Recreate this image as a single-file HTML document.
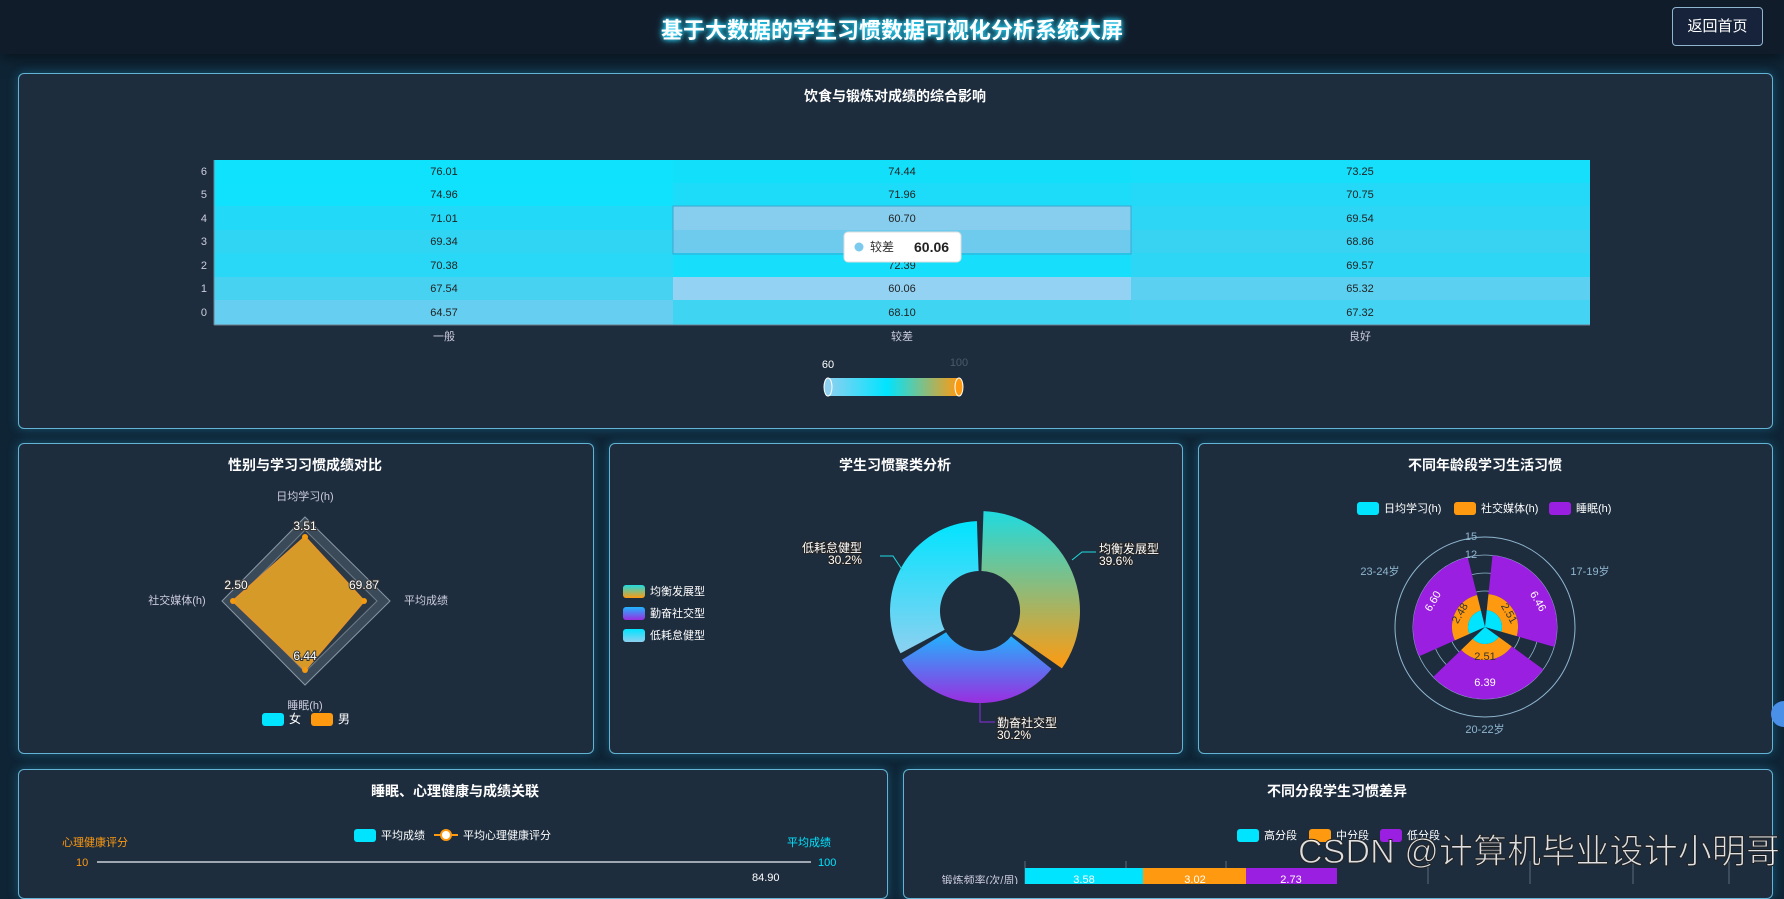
<!DOCTYPE html>
<html><head><meta charset="utf-8"><style>
*{margin:0;padding:0;box-sizing:border-box}
body{width:1784px;height:884px;overflow:hidden;background:#0f2536;font-family:"Liberation Sans","Noto Sans CJK SC",sans-serif;position:relative}
.hdr{position:absolute;left:0;top:0;width:1784px;height:54px;background:#111c2b;box-shadow:0 4px 14px rgba(0,0,0,.5)}
.hdr h1{position:absolute;left:0;width:1784px;top:13px;text-align:center;color:#fff;font-size:22px;font-weight:bold;text-shadow:0 0 8px #2bd9ff,0 0 4px #2bd9ff}
.btn{position:absolute;left:1672px;top:7px;width:91px;height:39px;border:1px solid #8fb6cf;border-radius:4px;color:#fff;font-size:15px;line-height:37px;text-align:center;background:#16233a}
.p{position:absolute;background:#1e2d3e;border:1px solid #63b3d4;border-radius:6px;box-shadow:0 0 10px rgba(40,170,220,.35)}
svg{position:absolute;left:0;top:0}
.t{fill:#fff;font-size:14px;font-weight:bold;text-anchor:middle}
</style></head><body>
<div class="hdr"><h1>基于大数据的学生习惯数据可视化分析系统大屏</h1><div class="btn">返回首页</div></div>
<div class="p" style="left:18px;top:73px;width:1755px;height:356px"></div>
<div class="p" style="left:18px;top:443px;width:576px;height:311px"></div>
<div class="p" style="left:609px;top:443px;width:574px;height:311px"></div>
<div class="p" style="left:1198px;top:443px;width:575px;height:311px"></div>
<div class="p" style="left:18px;top:769px;width:870px;height:130px"></div>
<div class="p" style="left:903px;top:769px;width:870px;height:130px"></div>
<svg width="1784" height="884" viewBox="0 0 1784 884">
<defs>
<linearGradient id="gA" x1="0" y1="0" x2="0" y2="1"><stop offset="0" stop-color="#1fdbe0"/><stop offset="1" stop-color="#ff9a10"/></linearGradient>
<linearGradient id="gB" x1="0" y1="0" x2="0" y2="1"><stop offset="0" stop-color="#1fb6ff"/><stop offset="1" stop-color="#9a2ee0"/></linearGradient>
<linearGradient id="gC" x1="0" y1="0" x2="0" y2="1"><stop offset="0" stop-color="#00e4ff"/><stop offset="1" stop-color="#8dd0f0"/></linearGradient>
<linearGradient id="vm" x1="0" y1="0" x2="1" y2="0"><stop offset="0" stop-color="#8dd0f0"/><stop offset=".45" stop-color="#00e4ff"/><stop offset="1" stop-color="#ff9a10"/></linearGradient>
</defs>
<text class="t" x="895" y="101">饮食与锻炼对成绩的综合影响</text>
<g stroke="none">
<rect x="214" y="160" width="459" height="24" fill="#0ee2fc"/><rect x="673" y="160" width="458" height="24" fill="#12e0fb"/><rect x="1131" y="160" width="459" height="24" fill="#16dffb"/>
<rect x="214" y="183" width="459" height="24" fill="#10e1fc"/><rect x="673" y="183" width="458" height="24" fill="#1cdcf9"/><rect x="1131" y="183" width="459" height="24" fill="#24d9f7"/>
<rect x="214" y="206" width="459" height="24" fill="#22d9f7"/><rect x="673" y="206" width="458" height="24" fill="#86cdee"/><rect x="1131" y="206" width="459" height="24" fill="#2ed6f5"/>
<rect x="214" y="230" width="459" height="24" fill="#30d5f4"/><rect x="673" y="230" width="458" height="24" fill="#6ecbed"/><rect x="1131" y="230" width="459" height="24" fill="#38d3f3"/>
<rect x="214" y="253" width="459" height="24" fill="#28d8f6"/><rect x="673" y="253" width="458" height="24" fill="#16defb"/><rect x="1131" y="253" width="459" height="24" fill="#2ed6f5"/>
<rect x="214" y="277" width="459" height="24" fill="#48d2f2"/><rect x="673" y="277" width="458" height="24" fill="#94d2f4"/><rect x="1131" y="277" width="459" height="24" fill="#5cd0f0"/>
<rect x="214" y="300" width="459" height="25" fill="#66cef0"/><rect x="673" y="300" width="458" height="25" fill="#40d4f3"/><rect x="1131" y="300" width="459" height="25" fill="#44d3f3"/>
</g>
<rect x="673" y="206" width="458" height="48" fill="none" stroke="#3aa8d0" stroke-width="1"/>
<g font-size="11" fill="#222" text-anchor="middle">
<text x="444" y="175">76.01</text><text x="902" y="175">74.44</text><text x="1360" y="175">73.25</text>
<text x="444" y="198">74.96</text><text x="902" y="198">71.96</text><text x="1360" y="198">70.75</text>
<text x="444" y="222">71.01</text><text x="902" y="222">60.70</text><text x="1360" y="222">69.54</text>
<text x="444" y="245">69.34</text><text x="1360" y="245">68.86</text>
<text x="444" y="269">70.38</text><text x="902" y="269">72.39</text><text x="1360" y="269">69.57</text>
<text x="444" y="292">67.54</text><text x="902" y="292">60.06</text><text x="1360" y="292">65.32</text>
<text x="444" y="316">64.57</text><text x="902" y="316">68.10</text><text x="1360" y="316">67.32</text>
</g>
<g font-size="11" fill="#ccd" text-anchor="end">
<text x="207" y="175">6</text><text x="207" y="198">5</text><text x="207" y="222">4</text><text x="207" y="245">3</text><text x="207" y="269">2</text><text x="207" y="292">1</text><text x="207" y="316">0</text>
</g>
<line x1="214" y1="325" x2="1590" y2="325" stroke="#6e7f90"/>
<line x1="214" y1="160" x2="214" y2="325" stroke="#6e7f90"/>
<g font-size="11" fill="#ccd" text-anchor="middle"><text x="444" y="340">一般</text><text x="902" y="340">较差</text><text x="1360" y="340">良好</text></g>
<rect x="844" y="232" width="117" height="30" rx="4" fill="#fff" stroke="#ddd"/>
<circle cx="859" cy="247" r="4.5" fill="#7ccbee"/>
<text x="870" y="251" font-size="12" fill="#333">较差</text>
<text x="914" y="252" font-size="14" font-weight="bold" fill="#222">60.06</text>
<text x="828" y="368" font-size="11" fill="#fff" text-anchor="middle">60</text>
<text x="959" y="366" font-size="11" fill="#4a5a6a" text-anchor="middle">100</text>
<rect x="828" y="378" width="131" height="18" fill="url(#vm)"/>
<ellipse cx="828" cy="387" rx="4" ry="9" fill="#8dd0f0" stroke="#fff"/>
<ellipse cx="959" cy="387" rx="4" ry="9" fill="#ff9a10" stroke="#fff"/>

<text class="t" x="305" y="470">性别与学习习惯成绩对比</text>
<polygon points="305,517 390,601 305,685 222,601" fill="#3b4a58" stroke="#8a98a5"/>
<polygon points="305,530 377,601 305,672 235,601" fill="#2b3846" stroke="#6f7d8a"/>
<polygon points="305,537 364,601 305,670 233,601" fill="#d69a28" stroke="#e0962a" stroke-width="2"/>
<g fill="#f39a10"><circle cx="305" cy="537" r="3"/><circle cx="364" cy="601" r="3"/><circle cx="305" cy="670" r="3"/><circle cx="233" cy="601" r="3"/></g>
<g font-size="12" fill="#fff" text-anchor="middle" style="paint-order:stroke" stroke="#333" stroke-width="2">
<text x="305" y="530">3.51</text><text x="364" y="589">69.87</text><text x="305" y="660">6.44</text><text x="236" y="589">2.50</text></g>
<g font-size="11" fill="#ccd" text-anchor="middle"><text x="305" y="500">日均学习(h)</text><text x="426" y="604">平均成绩</text><text x="305" y="709">睡眠(h)</text><text x="177" y="604">社交媒体(h)</text></g>
<rect x="262" y="713" width="22" height="13" rx="3" fill="#00e4ff"/><text x="289" y="723" font-size="12" fill="#fff">女</text>
<rect x="311" y="713" width="22" height="13" rx="3" fill="#ff9a10"/><text x="338" y="723" font-size="12" fill="#fff">男</text>

<text class="t" x="895" y="470">学生习惯聚类分析</text>
<path d="M983.5,511.1 A100,100 0 0 1 1061.9,668.4 L1012.8,634 A40,40 0 0 0 981.4,571 Z" fill="url(#gA)"/>
<path d="M1051.5,668.9 A92,92 0 0 1 902,659.8 L946.1,632.2 A40,40 0 0 0 1011.1,636.2 Z" fill="url(#gB)"/>
<path d="M900.5,653.2 A90,90 0 0 1 976.9,521.1 L978.6,571 A40,40 0 0 0 944.7,629.8 Z" fill="url(#gC)"/>
<polyline points="1072,560 1082,552 1096,552" fill="none" stroke="#1fdbe0"/>
<polyline points="903,571 893,556 880,556" fill="none" stroke="#1fdbe0"/>
<polyline points="980,703 980,722 995,722" fill="none" stroke="#8a2ee0"/>
<g font-size="12" fill="#fff" style="paint-order:stroke" stroke="#222" stroke-width="2">
<text x="1099" y="553">均衡发展型</text><text x="1099" y="565">39.6%</text>
<text x="802" y="552">低耗怠健型</text><text x="828" y="564">30.2%</text>
<text x="997" y="727">勤奋社交型</text><text x="997" y="739">30.2%</text></g>
<rect x="623" y="585" width="22" height="13" rx="3" fill="url(#gA)"/><text x="650" y="595" font-size="11" fill="#fff">均衡发展型</text>
<rect x="623" y="607" width="22" height="13" rx="3" fill="url(#gB)"/><text x="650" y="617" font-size="11" fill="#fff">勤奋社交型</text>
<rect x="623" y="629" width="22" height="13" rx="3" fill="url(#gC)"/><text x="650" y="639" font-size="11" fill="#fff">低耗怠健型</text>

<text class="t" x="1485" y="470">不同年龄段学习生活习惯</text>
<rect x="1357" y="502" width="22" height="13" rx="3" fill="#00e4ff"/><text x="1384" y="512" font-size="11" fill="#fff">日均学习(h)</text>
<rect x="1454" y="502" width="22" height="13" rx="3" fill="#ff9a10"/><text x="1481" y="512" font-size="11" fill="#fff">社交媒体(h)</text>
<rect x="1549" y="502" width="22" height="13" rx="3" fill="#9b1fe0"/><text x="1576" y="512" font-size="11" fill="#fff">睡眠(h)</text>
<circle cx="1485" cy="627" r="90" fill="none" stroke="#8fb6cf"/>
<g fill="none" stroke="#8fb6cf" stroke-width=".8"><circle cx="1485" cy="627" r="54"/><circle cx="1485" cy="627" r="72"/><circle cx="1485" cy="627" r="36"/></g>
<g fill="none">
<circle cx="1485" cy="627" r="52.5" stroke="#9b1fe0" stroke-width="39" stroke-dasharray="91.6 300" transform="rotate(-84 1485 627)"/>
<circle cx="1485" cy="627" r="52.5" stroke="#9b1fe0" stroke-width="39" stroke-dasharray="91.6 300" transform="rotate(36 1485 627)"/>
<circle cx="1485" cy="627" r="52.5" stroke="#9b1fe0" stroke-width="39" stroke-dasharray="91.6 300" transform="rotate(156 1485 627)"/>
<circle cx="1485" cy="627" r="25" stroke="#ff9a10" stroke-width="16" stroke-dasharray="43.6 200" transform="rotate(-84 1485 627)"/>
<circle cx="1485" cy="627" r="25" stroke="#ff9a10" stroke-width="16" stroke-dasharray="43.6 200" transform="rotate(36 1485 627)"/>
<circle cx="1485" cy="627" r="25" stroke="#ff9a10" stroke-width="16" stroke-dasharray="43.6 200" transform="rotate(156 1485 627)"/>
<circle cx="1485" cy="627" r="8.5" stroke="#00e4ff" stroke-width="17" stroke-dasharray="14.8 100" transform="rotate(-84 1485 627)"/>
<circle cx="1485" cy="627" r="8.5" stroke="#00e4ff" stroke-width="17" stroke-dasharray="14.8 100" transform="rotate(36 1485 627)"/>
<circle cx="1485" cy="627" r="8.5" stroke="#00e4ff" stroke-width="17" stroke-dasharray="14.8 100" transform="rotate(156 1485 627)"/>
</g>
<g font-size="11" fill="#fff" text-anchor="middle">
<text x="1535" y="603" transform="rotate(60 1535 603)">6.46</text>
<text x="1436" y="603" transform="rotate(-60 1436 603)">6.60</text>
<text x="1485" y="686">6.39</text><text x="1485" y="660" fill="#333">2.51</text>
<text x="1506" y="615" fill="#333" transform="rotate(60 1506 615)">2.51</text>
<text x="1463" y="615" fill="#333" transform="rotate(-60 1463 615)">2.48</text></g>
<g font-size="11" fill="#8fb6cf" text-anchor="middle"><text x="1471" y="540">15</text><text x="1471" y="558">12</text><text x="1590" y="575">17-19岁</text><text x="1380" y="575">23-24岁</text><text x="1485" y="733">20-22岁</text></g>
<circle cx="1784" cy="714" r="13" fill="#4a8fe8"/>

<text class="t" x="455" y="796">睡眠、心理健康与成绩关联</text>
<rect x="354" y="829" width="22" height="13" rx="3" fill="#00e4ff"/><text x="381" y="839" font-size="11" fill="#fff">平均成绩</text>
<line x1="434" y1="835" x2="458" y2="835" stroke="#ff9a10" stroke-width="2"/><circle cx="446" cy="835" r="5" fill="#fff" stroke="#ff9a10" stroke-width="2"/><text x="463" y="839" font-size="11" fill="#fff">平均心理健康评分</text>
<text x="62" y="846" font-size="11" fill="#ff9a10">心理健康评分</text>
<text x="787" y="846" font-size="11" fill="#00e4ff">平均成绩</text>
<text x="76" y="866" font-size="11" fill="#ff9a10">10</text>
<line x1="97" y1="862" x2="811" y2="862" stroke="#c8d0d8" stroke-width="1.5"/>
<text x="818" y="866" font-size="11" fill="#00e4ff">100</text>
<text x="752" y="881" font-size="11" fill="#fff">84.90</text>

<text class="t" x="1337" y="796">不同分段学生习惯差异</text>
<rect x="1237" y="829" width="22" height="13" rx="3" fill="#00e4ff"/><text x="1264" y="839" font-size="11" fill="#fff">高分段</text>
<rect x="1309" y="829" width="22" height="13" rx="3" fill="#ff9a10"/><text x="1336" y="839" font-size="11" fill="#fff">中分段</text>
<rect x="1380" y="829" width="22" height="13" rx="3" fill="#9b1fe0"/><text x="1407" y="839" font-size="11" fill="#fff">低分段</text>
<g stroke="#5a6a7a"><line x1="1025" y1="861" x2="1025" y2="884"/><line x1="1126" y1="861" x2="1126" y2="884"/><line x1="1226" y1="861" x2="1226" y2="884"/><line x1="1428" y1="861" x2="1428" y2="884"/><line x1="1530" y1="861" x2="1530" y2="884"/><line x1="1633" y1="861" x2="1633" y2="884"/><line x1="1729" y1="861" x2="1729" y2="884"/></g>
<rect x="1025" y="868" width="118" height="20" fill="#00e4ff"/><rect x="1143" y="868" width="103" height="20" fill="#ff9a10"/><rect x="1246" y="868" width="91" height="20" fill="#9b1fe0"/>
<g font-size="11" fill="#fff" text-anchor="middle"><text x="1084" y="883">3.58</text><text x="1195" y="883">3.02</text><text x="1291" y="883">2.73</text></g>
<text x="1018" y="884" font-size="11" fill="#ccd" text-anchor="end">锻炼频率(次/周)</text>
<text x="1298" y="863" font-size="34" fill="rgba(255,255,255,.85)" stroke="#222" stroke-width="1" textLength="482">CSDN @计算机毕业设计小明哥</text>
</svg>
</body></html>
